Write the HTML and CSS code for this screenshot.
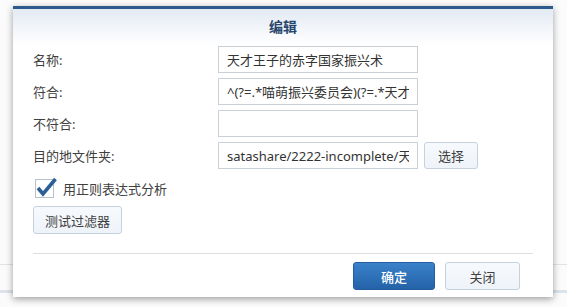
FILE: index.html
```html
<!DOCTYPE html>
<html lang="zh">
<head>
<meta charset="utf-8">
<title>编辑</title>
<link rel="stylesheet" href="styles.css">
</head>
<body>
<div class="dialog">
  <div class="header">编辑</div>
  <div class="form">
    <div class="row">
      <label class="label">名称:</label>
      <input class="input" type="text" value="天才王子的赤字国家振兴术">
    </div>
    <div class="row">
      <label class="label">符合:</label>
      <input class="input" type="text" value="^(?=.*喵萌振兴委员会)(?=.*天才王子的赤字国家振兴术)">
    </div>
    <div class="row">
      <label class="label">不符合:</label>
      <input class="input" type="text" value="">
    </div>
    <div class="row">
      <label class="label">目的地文件夹:</label>
      <input class="input" type="text" value="satashare/2222-incomplete/天才王子的赤字国家振兴术">
      <button class="btn btn-select">选择</button>
    </div>
    <div class="check-row">
      <span class="checkbox">
        <svg width="24" height="24" viewBox="0 0 24 24">
          <rect x="0.5" y="3.5" width="18" height="18" fill="#fff" stroke="#b9c2cc"/>
          <path d="M3 12 L8 18 L20.5 3" fill="none" stroke="#2d5f97" stroke-width="3.6" stroke-linejoin="miter" stroke-linecap="butt"/>
        </svg>
      </span>
      <span class="check-label">用正则表达式分析</span>
    </div>
    <div class="test-row">
      <button class="btn btn-test">测试过滤器</button>
    </div>
  </div>
  <div class="separator"></div>
  <div class="footer">
    <button class="btn btn-primary">确定</button>
    <button class="btn btn-close">关闭</button>
  </div>
</div>
</body>
</html>
```

FILE: styles.css
```css
html, body {
  margin: 0;
  padding: 0;
}

body {
  width: 567px;
  height: 307px;
  overflow: hidden;
  font-family: "Noto Sans", "Noto Sans CJK SC", sans-serif;
  font-size: 13px;
  color: #404040;
  background:
    linear-gradient(#e3e3e3, #e3e3e3) 0 264px / 100% 1px no-repeat,
    linear-gradient(#dce3eb, #dce3eb) 0 290px / 100% 3px no-repeat,
    #fbfbfb;
}

.dialog {
  margin: 6px 0 0 13px;
  width: 540px;
  height: 288px;
  border-top: 3px solid #2b5a8d;
  background: #fff;
  box-shadow: 0 2px 7px rgba(0, 0, 0, 0.38);
  display: flex;
  flex-direction: column;
}

.header {
  height: 36px;
  line-height: 36px;
  text-align: center;
  font-weight: bold;
  font-size: 14px;
  color: #27466d;
  background: linear-gradient(#e3eaf3, #ffffff);
}

.form {
  padding: 1px 20px 0 20px;
  display: flex;
  flex-direction: column;
  gap: 5px;
}

.row {
  display: flex;
  align-items: center;
  height: 27px;
}

.label {
  width: 185px;
  flex: none;
}

.input {
  box-sizing: border-box;
  margin: 0;
  width: 200px;
  height: 27px;
  border: 1px solid #c9d0d8;
  border-radius: 0;
  padding: 0 8px;
  font-family: "Noto Sans", "Noto Sans CJK SC", sans-serif;
  font-size: 13px;
  color: #333;
  background: #fff;
  outline: none;
}

.btn {
  box-sizing: border-box;
  font-family: "Noto Sans", "Noto Sans CJK SC", sans-serif;
  font-size: 13px;
  color: #404040;
  border: 1px solid #c6d1dd;
  border-radius: 3px;
  background: linear-gradient(#f7fafd, #eef3f9);
  padding: 0;
  cursor: pointer;
}

.btn-select {
  margin-left: 6px;
  width: 54px;
  height: 27px;
}

.check-row {
  margin-top: 3px;
  display: flex;
  align-items: center;
  height: 22px;
}

.checkbox {
  margin-left: 2px;
  width: 26px;
  height: 24px;
  flex: none;
}

.checkbox svg {
  display: block;
}

.check-label {
  margin-left: 2px;
}

.test-row {
  margin-top: 2px;
  display: flex;
}

.btn-test {
  width: 89px;
  height: 28px;
}

.separator {
  margin: 19px 20px 0 20px;
  height: 1px;
  background: #dedede;
}

.footer {
  margin-top: 8px;
  padding-right: 33px;
  display: flex;
  justify-content: flex-end;
  gap: 10px;
}

.btn-primary {
  width: 82px;
  height: 28px;
  color: #fff;
  font-weight: 500;
  border-color: #225e9e;
  background: linear-gradient(#3a82ca, #2462a8);
}

.btn-close {
  width: 75px;
  height: 28px;
}
```
